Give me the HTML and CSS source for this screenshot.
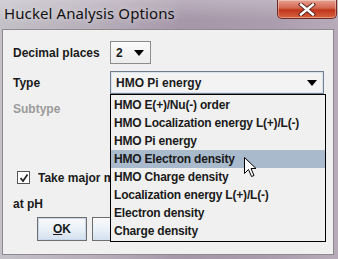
FILE: index.html
```html
<!DOCTYPE html>
<html>
<head>
<meta charset="utf-8">
<link rel="stylesheet" href="styles.css">
</head>
<body>
<div class="window">
  <div class="titlebar">
    <span class="title">Huckel Analysis Options</span>
    <span class="close"><svg width="20" height="13" viewBox="0 0 20 13"><path d="M4 1.5 L16 11.5 M16 1.5 L4 11.5" stroke="#4a1d16" stroke-width="4.2" stroke-linecap="square"/><path d="M4 1.5 L16 11.5 M16 1.5 L4 11.5" stroke="#fff" stroke-width="2.4" stroke-linecap="square"/></svg></span>
  </div>
  <div class="panel">
    <div class="row r1">
      <span class="label">Decimal places</span>
      <div class="combo small"><span class="val">2</span><span class="arrow"></span></div>
    </div>
    <div class="row r2">
      <span class="label">Type</span>
      <div class="combo wide"><span class="val">HMO Pi energy</span><span class="arrow"></span></div>
    </div>
    <div class="row r3">
      <span class="label dim">Subtype</span>
    </div>
    <div class="row r4">
      <span class="check"><svg width="10" height="10" viewBox="0 0 10 10"><path d="M1.5 5 L4 8 L8.5 1.5" stroke="#222" stroke-width="1.7" fill="none"/></svg></span>
      <span class="label clip">Take major m</span>
    </div>
    <div class="row r5">
      <span class="label">at pH</span>
    </div>
    <div class="buttons">
      <button class="btn ok"><u>O</u>K</button>
      <button class="btn other"></button>
    </div>
    <ul class="popup">
      <li>HMO E(+)/Nu(-) order</li>
      <li>HMO Localization energy L(+)/L(-)</li>
      <li>HMO Pi energy</li>
      <li class="sel">HMO Electron density</li>
      <li>HMO Charge density</li>
      <li>Localization energy L(+)/L(-)</li>
      <li>Electron density</li>
      <li>Charge density</li>
    </ul>
  </div>
  <svg class="cursor" width="13" height="21" viewBox="0 0 13 21"><path d="M0.5 0.5 L0.5 16.5 L4.5 12.5 L7.5 19.5 L10 18.5 L7 11.5 L12 11.5 Z" fill="#fff" stroke="#000" stroke-width="1"/></svg>
</div>
</body>
</html>
```

FILE: styles.css
```css
* { box-sizing: border-box; }
html, body { margin: 0; padding: 0; }
body {
  width: 338px;
  height: 259px;
  overflow: hidden;
  font-family: "Liberation Sans", Arial, sans-serif;
}
.window {
  position: relative;
  width: 338px;
  height: 259px;
  background: linear-gradient(90deg, #c4c1c8 0%, #b6adb9 30%, #a596a8 55%, #aa9cad 80%, #b7abb9 100%);
  display: flex;
  flex-direction: column;
}
.titlebar {
  height: 29px;
  display: flex;
  justify-content: space-between;
  align-items: flex-start;
  background: linear-gradient(180deg, rgba(255,255,255,0.25), rgba(255,255,255,0) 70%);
}
.title {
  font-family: "Noto Sans", "Open Sans", sans-serif;
  font-size: 15px;
  color: #111;
  margin: 3px 0 0 4px;
  text-shadow: 0 0 6px rgba(255,255,255,0.7);
  letter-spacing: 0.1px;
}
.close {
  width: 60px;
  height: 19px;
  margin-right: 1px;
  border: 1px solid #6b2a22;
  border-top: none;
  border-radius: 0 0 5px 5px;
  background: linear-gradient(180deg, #e7a193 0%, #d4664f 45%, #c0351c 55%, #d8613f 100%);
  display: flex;
  align-items: center;
  justify-content: center;
  box-shadow: inset 0 0 0 1px rgba(255,255,255,0.35);
}
.panel {
  position: relative;
  margin: 0 4px 4px 2px;
  flex: 1;
  background: #f0f0f0;
  border: 1px solid #8e8a90;
  padding: 0 0 0 10px;
}
.row {
  display: grid;
  grid-template-columns: 97px 1fr;
  align-items: center;
}
.label {
  font-weight: bold;
  font-size: 12px;
  color: #1b1b1b;
  white-space: nowrap;
}
.label.dim { color: #9a9a9a; }
.label.clip { overflow: hidden; width: 73px; }
.r1 { margin-top: 11px; height: 23px; }
.r2 { margin-top: 7px; height: 23px; }
.r3 { margin-top: 6px; height: 18px; }
.r4 {
  margin-top: 52px;
  height: 15px;
  display: flex;
  gap: 8px;
  padding-left: 4px;
}
.r5 { margin-top: 11px; height: 16px; }
.combo {
  position: relative;
  height: 23px;
  border: 1px solid #8c8c8c;
  background: linear-gradient(180deg, #fbfbfb, #ececec);
  display: flex;
  align-items: center;
  padding-left: 5px;
  font-weight: bold;
  font-size: 12px;
  color: #1b1b1b;
}
.combo.small { width: 41px; }
.combo.wide {
  width: 214px;
  border-color: #6f7f90;
  box-shadow: inset 0 0 0 1px #d8e2ec;
  background: #f3f3f3;
}
.combo .val { flex: 1; }
.arrow {
  width: 0; height: 0;
  border-left: 5px solid transparent;
  border-right: 5px solid transparent;
  border-top: 6px solid #000;
  margin-right: 6px;
}
.check {
  width: 13px;
  height: 13px;
  border: 1px solid #555;
  background: #fff;
  display: flex;
  align-items: center;
  justify-content: center;
}
.buttons {
  margin-top: 5px;
  display: flex;
  gap: 5px;
  padding-left: 24px;
}
.btn {
  height: 24px;
  border: 1px solid #6e6e6e;
  background: linear-gradient(180deg, #fafafa 0%, #eaf1f8 50%, #d3e0ee 100%);
  font-family: "Liberation Sans", Arial, sans-serif;
  font-weight: bold;
  font-size: 12px;
  color: #1b1b1b;
  padding: 0;
}
.btn.ok { width: 50px; box-shadow: inset 0 0 0 1px #c8d8ea; }
.btn.other { width: 206px; }
.popup {
  position: absolute;
  left: 107px;
  top: 64px;
  width: 216px;
  height: 148px;
  margin: 0;
  padding: 1px 0 0 0;
  list-style: none;
  background: #f0f0f0;
  border: 1px solid #000;
}
.popup li {
  height: 18px;
  line-height: 18px;
  padding-left: 3px;
  font-weight: bold;
  font-size: 12px;
  letter-spacing: -0.2px;
  color: #1b1b1b;
  white-space: nowrap;
}
.popup li.sel { background: #a9bacd; }
.cursor {
  position: absolute;
  left: 244px;
  top: 157px;
}
```
